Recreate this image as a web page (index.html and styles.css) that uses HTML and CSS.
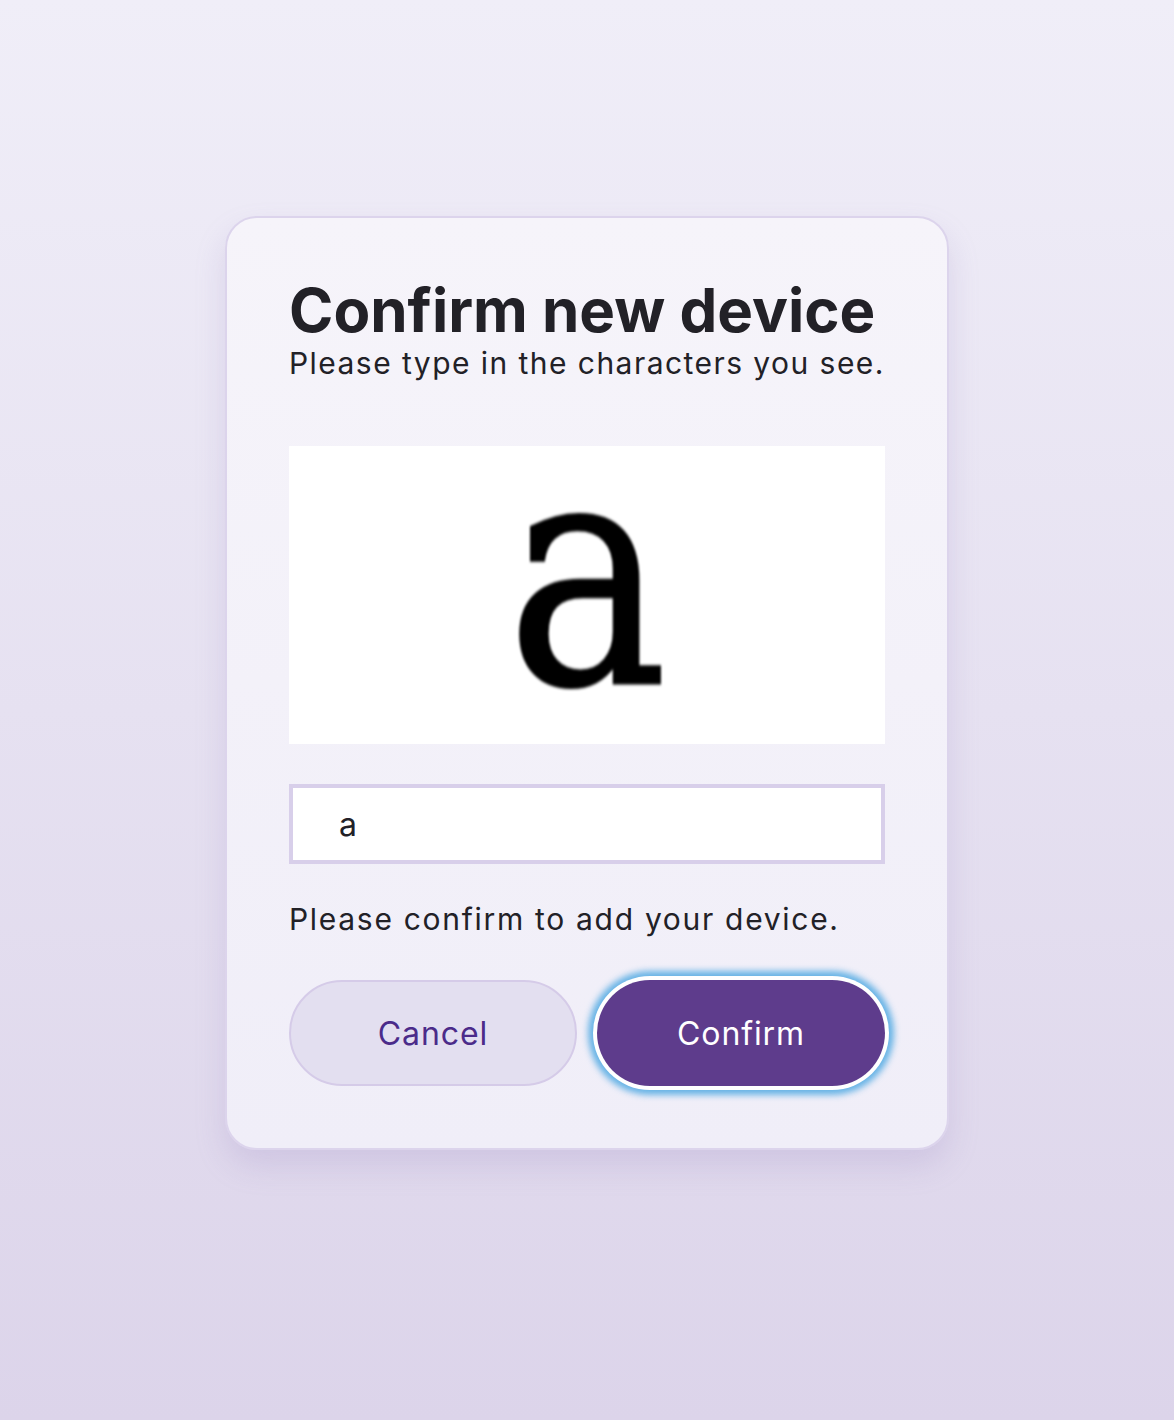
FILE: index.html
```html
<!DOCTYPE html>
<html lang="en">
<head>
<meta charset="utf-8">
<title>Confirm new device</title>
<link rel="stylesheet" href="styles.css">
</head>
<body>
<main class="page">
  <section class="card">
    <h1 class="title">Confirm new device</h1>
    <p class="subtitle">Please type in the characters you see.</p>
    <div class="captcha"><span class="captcha-char">a</span></div>
    <div class="field"><span class="field-value">a</span></div>
    <p class="note">Please confirm to add your device.</p>
    <div class="actions">
      <button class="btn btn-cancel" type="button">Cancel</button>
      <button class="btn btn-confirm" type="button">Confirm</button>
    </div>
  </section>
</main>
</body>
</html>
```

FILE: styles.css
```css
* { box-sizing: border-box; }
html, body { margin: 0; padding: 0; }
body {
  min-height: 1420px;
  background: linear-gradient(180deg, #f0eef8 0%, #e6e1f1 50%, #dcd4ea 100%);
  font-family: Inter, "Liberation Sans", sans-serif;
  color: #222127;
}
.page {
  display: flex;
  justify-content: center;
  padding-top: 216px;
}
.card {
  width: 724px;
  padding: 60px 62px 62px;
  background: linear-gradient(180deg, #f6f4fa 0%, #f0eef8 100%);
  border: 2px solid #dcd4ec;
  border-radius: 32px;
  box-shadow: 0 16px 30px rgba(150, 130, 190, 0.22);
}
.title {
  margin: 0;
  font-size: 60px;
  line-height: 64px;
  font-weight: 700;
  letter-spacing: 0;
  white-space: nowrap;
  color: #222127;
}
.subtitle {
  margin: 1px 0 0;
  font-size: 30px;
  line-height: 40px;
  font-weight: 400;
  letter-spacing: 1.45px;
  white-space: nowrap;
}
.captcha {
  margin-top: 63px;
  height: 298px;
  padding-top: 10px;
  background: #ffffff;
  display: flex;
  justify-content: center;
  align-items: flex-start;
  overflow: hidden;
}
.captcha-char {
  font-family: "DejaVu Serif", serif;
  font-size: 316px;
  line-height: 0.75;
  color: #000;
  -webkit-text-stroke: 3px #000;
  filter: blur(1.5px);
  transform: scaleX(0.85);
}
.field {
  margin-top: 40px;
  height: 80px;
  background: #fff;
  border: 4px solid #d8cfea;
  display: flex;
  align-items: center;
  padding-left: 46px;
}
.field-value {
  font-size: 32px;
  color: #222127;
}
.note {
  margin: 35px 0 0;
  font-size: 30px;
  line-height: 40px;
  letter-spacing: 1.7px;
  white-space: nowrap;
}
.actions {
  margin-top: 41px;
  display: grid;
  grid-template-columns: 1fr 1fr;
  gap: 20px;
}
.btn {
  height: 106px;
  border-radius: 53px;
  font-family: inherit;
  font-size: 32px;
  letter-spacing: 0.9px;
  cursor: pointer;
}
.btn-cancel {
  background: #e3dff0;
  border: 2px solid #d5cbe8;
  color: #4b2b8a;
}
.btn-confirm {
  background: #5e3c8c;
  border: none;
  color: #fff;
  box-shadow: 0 0 0 4px #ffffff, 0 0 6px 9px rgba(70, 165, 225, 0.8);
}
```
